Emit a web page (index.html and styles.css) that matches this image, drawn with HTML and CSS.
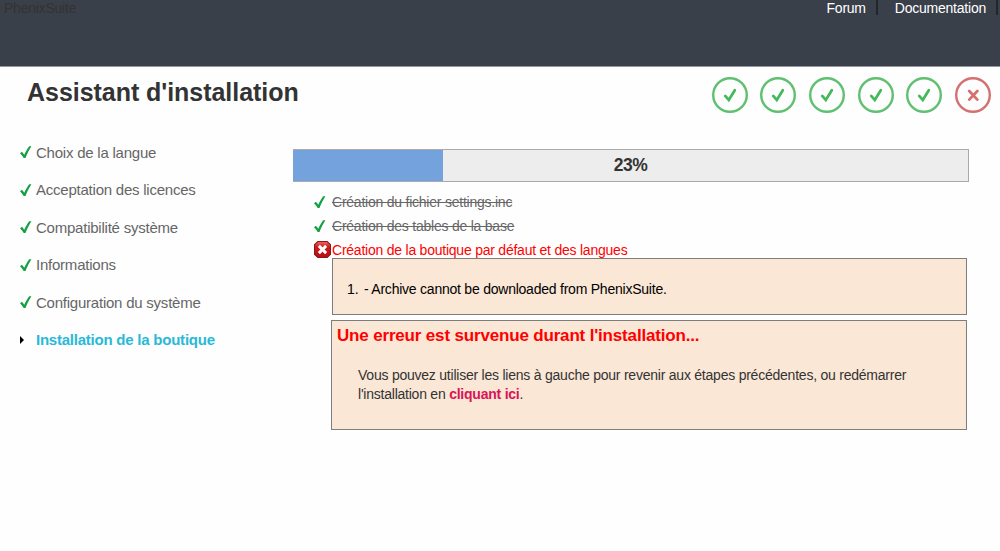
FILE: index.html
```html
<!DOCTYPE html>
<html lang="fr">
<head>
    <meta charset="UTF-8">
    <title>Assistant d'installation</title>
    <link rel="stylesheet" href="styles.css">
</head>
<body>

<svg class="symbols">
    <symbol id="check" viewBox="0 0 12 14">
        <path d="M0 8.2 L2 6.8 L4.3 9.8 C5.6 6.8 7.2 3.8 9.2 1.2 L11.4 1.2 C9.2 4.8 7.2 8.6 5.5 13 L3.7 13 C2.7 11.2 1.4 9.7 0 8.2 Z" fill="#159f45"/>
    </symbol>
    <symbol id="step-ok" viewBox="0 0 36 36">
        <circle cx="18" cy="18" r="16.8" fill="none" stroke="#5fc070" stroke-width="2.4"/>
        <path d="M13.2 18.9 L16.8 23 L22.8 13.2" fill="none" stroke="#42b95a" stroke-width="2.7" stroke-linecap="round"/>
    </symbol>
    <symbol id="step-ko" viewBox="0 0 36 36">
        <circle cx="18" cy="18" r="16.8" fill="none" stroke="#d5706f" stroke-width="2.4"/>
        <path d="M14.2 14 L22.4 22.6 M22.4 14 L14.2 22.6" fill="none" stroke="#d5706f" stroke-width="2.8" stroke-linecap="round"/>
    </symbol>
</svg>

<header class="header">
    <div class="logo">PhenixSuite</div>
    <ul class="header-links">
        <li><a href="#">Forum</a></li>
        <li><a href="#">Documentation</a></li>
    </ul>
</header>

<div class="title-bar">
    <h1>Assistant d'installation</h1>
    <div class="steps">
        <svg><use href="#step-ok"/></svg>
        <svg><use href="#step-ok"/></svg>
        <svg><use href="#step-ok"/></svg>
        <svg><use href="#step-ok"/></svg>
        <svg><use href="#step-ok"/></svg>
        <svg><use href="#step-ko"/></svg>
    </div>
</div>

<div class="container">
    <ul class="menu">
        <li><svg class="check"><use href="#check"/></svg><a href="#">Choix de la langue</a></li>
        <li><svg class="check"><use href="#check"/></svg><a href="#">Acceptation des licences</a></li>
        <li><svg class="check"><use href="#check"/></svg><a href="#">Compatibilité système</a></li>
        <li><svg class="check"><use href="#check"/></svg><a href="#">Informations</a></li>
        <li><svg class="check"><use href="#check"/></svg><a href="#">Configuration du système</a></li>
        <li class="selected"><span class="arrow"></span>Installation de la boutique</li>
    </ul>

    <div class="content">
        <div class="progress">
            <div class="progress-bar"></div>
            <div class="progress-text">23%</div>
        </div>

        <ul class="tasks">
            <li class="done"><svg class="check"><use href="#check"/></svg><span>Création du fichier settings.inc</span></li>
            <li class="done"><svg class="check"><use href="#check"/></svg><span>Création des tables de la base</span></li>
            <li class="fail">
                <svg class="cross" viewBox="0 0 16 16">
                    <defs>
                        <linearGradient id="red" x1="0" y1="0" x2="0" y2="1">
                            <stop offset="0" stop-color="#ee6a64"/>
                            <stop offset="0.35" stop-color="#cf1a1e"/>
                            <stop offset="1" stop-color="#b50d14"/>
                        </linearGradient>
                    </defs>
                    <path d="M3.5 0.5 H12.5 L15.5 3.5 V12.5 L12.5 15.5 H3.5 L0.5 12.5 V3.5 Z" fill="url(#red)" stroke="#8e1418" stroke-linejoin="round"/>
                    <path d="M4.6 4.6 L11.4 11.4 M11.4 4.6 L4.6 11.4" stroke="#fff" stroke-width="2.7"/>
                </svg>
                <span>Création de la boutique par défaut et des langues</span>
            </li>
        </ul>

        <ol class="error-list">
            <li>- Archive cannot be downloaded from PhenixSuite.</li>
        </ol>

        <div class="error-box">
            <h3>Une erreur est survenue durant l'installation...</h3>
            <p>Vous pouvez utiliser les liens à gauche pour revenir aux étapes précédentes, ou redémarrer l'installation en <a href="#">cliquant ici</a>.</p>
        </div>
    </div>
</div>

</body>
</html>
```
FILE: styles.css
```css
* {
    box-sizing: border-box;
}
body {
    font-family: "Liberation Sans", Arial, sans-serif;
    font-size: 14px;
    letter-spacing: -0.23px;
    color: #333;
    background-color: #fefefe;
    margin: 0;
}
ul, ol {
    list-style: none;
    margin: 0;
    padding: 0;
}
a {
    color: inherit;
    text-decoration: none;
}
.symbols {
    display: none;
}
.header {
    display: flex;
    justify-content: space-between;
    height: 67px;
    background-color: #3a4049;
    border-bottom: 1px solid #94979d;
}
.logo {
    padding-left: 4px;
    line-height: 16px;
}
.header-links {
    display: flex;
    color: #fff;
    line-height: 16px;
}
.header-links li {
    height: 15px;
    padding-right: 10px;
    margin-right: 17px;
    border-right: 2px solid #22262b;
}
.header-links li:last-child {
    margin-right: 2px;
}
.title-bar {
    display: flex;
    justify-content: space-between;
    padding: 10px 9px 0 27px;
}
.title-bar h1 {
    margin: 0;
    font-size: 25px;
    letter-spacing: -0.04px;
    line-height: 30px;
}
.steps {
    display: flex;
    gap: 12.7px;
}
.steps svg {
    width: 36px;
    height: 36px;
}
.container {
    display: flex;
    padding-top: 36px;
}
.menu {
    width: 293px;
    padding: 0 0 0 20px;
    margin-top: -7px;
    font-size: 15px;
    color: #666;
}
.menu li {
    display: flex;
    align-items: center;
    height: 20px;
    margin-bottom: 17.5px;
}
.check {
    width: 12px;
    height: 14px;
    margin-right: 4px;
}
.menu .selected {
    color: #29b9d8;
    font-weight: bold;
}
.arrow {
    width: 16px;
}
.arrow::before {
    content: "";
    display: block;
    width: 0;
    border-left: 4px solid #000;
    border-top: 4px solid transparent;
    border-bottom: 4px solid transparent;
}
.content {
    width: 676px;
}
.progress {
    position: relative;
    height: 33px;
    background-color: #ededed;
    border: 1px solid #aaa;
    border-left: none;
}
.progress-bar {
    width: 150px;
    height: 100%;
    background-color: #73a2dc;
}
.progress-text {
    position: absolute;
    inset: 0;
    text-align: center;
    font-size: 17.5px;
    line-height: 31px;
    font-weight: bold;
    letter-spacing: -0.5px;
}
.tasks {
    padding: 8px 0 0 21px;
}
.tasks li {
    display: flex;
    align-items: center;
    height: 24px;
}
.done {
    color: #666;
}
.done span {
    text-decoration: line-through;
}
.done .check {
    margin-right: 6px;
}
.fail {
    color: #f00;
}
.cross {
    width: 17px;
    height: 17px;
    margin: -1px 1.5px 0 -0.5px;
}
.error-list, .error-box {
    background-color: #fae7d6;
    border: 1px solid #7d7d7d;
}
.error-list {
    height: 57px;
    margin: -4px 2px 0 39px;
    padding: 21px 0 0 29px;
    list-style: decimal;
    color: #000;
    line-height: 18px;
}
.error-list li {
    padding-left: 2px;
}
.error-box {
    height: 110px;
    margin: 5px 2px 0 38px;
    padding: 5px 5px 0;
}
.error-box h3 {
    margin: 0;
    color: #f00;
    font-size: 17px;
    letter-spacing: -0.17px;
    line-height: 20px;
}
.error-box p {
    margin: 20px 40px 0 21px;
    line-height: 19px;
}
.error-box a {
    color: #d91456;
    font-weight: bold;
}
```
